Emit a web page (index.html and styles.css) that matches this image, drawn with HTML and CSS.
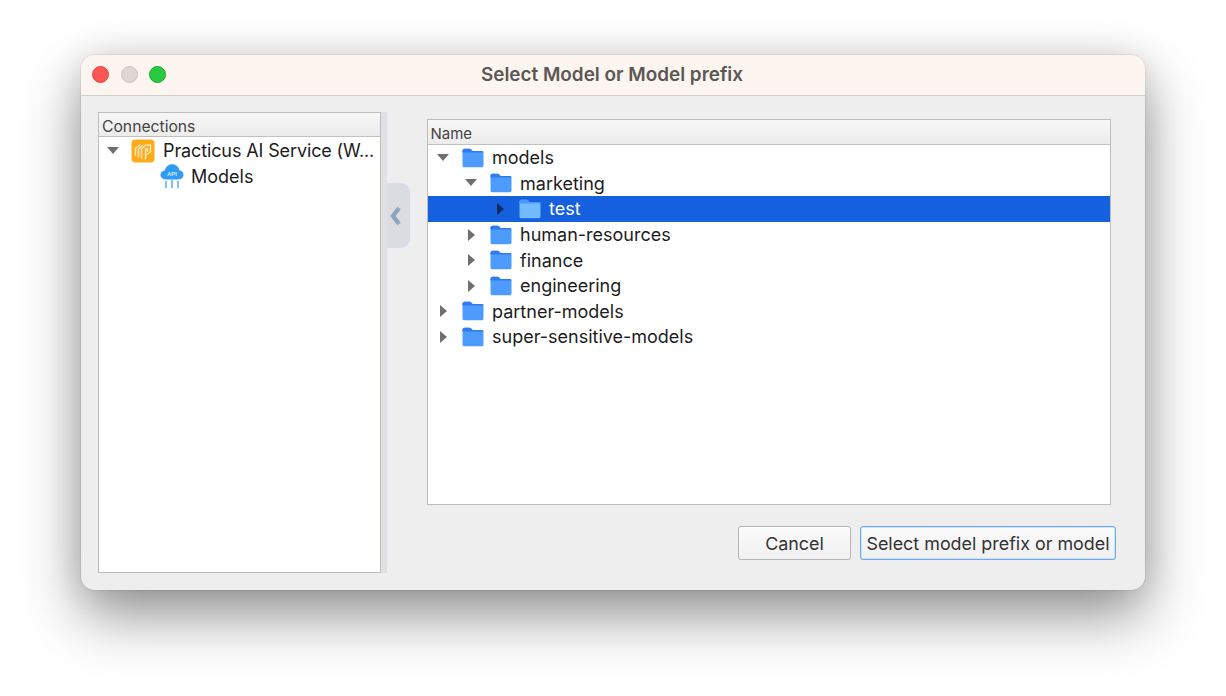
FILE: index.html
```html
<!DOCTYPE html>
<html lang="en">
<head>
<meta charset="utf-8">
<title>Select Model or Model prefix</title>
<link rel="stylesheet" href="styles.css">
</head>
<body>
<svg class="defs" width="0" height="0" aria-hidden="true">
  <defs>
    <symbol id="folder" viewBox="0 0 22 20">
      <path d="M0.5 3C0.5 1.8 1.3 0.8 2.6 0.8H7.4C8.3 0.8 8.8 1.2 9.4 1.8L10.6 3H19.6C20.8 3 21.5 3.8 21.5 5V17.2C21.5 18.5 20.8 19.3 19.6 19.3H2.4C1.2 19.3 0.5 18.5 0.5 17.2Z" fill="#4d9cfd"/>
      <path d="M0.5 3C0.5 1.8 1.3 0.8 2.6 0.8H7.4C8.3 0.8 8.8 1.2 9.4 1.8L10.6 3H19.6C20.8 3 21.5 3.6 21.5 4.4H0.5Z" fill="#2f7bf0"/>
    </symbol>
  </defs>
</svg>
<main class="window">
  <header class="titlebar">
    <div class="lights">
      <span class="light light-red"></span>
      <span class="light light-grey"></span>
      <span class="light light-green"></span>
    </div>
    <h1 class="title">Select Model or Model prefix</h1>
  </header>
  <div class="content">
    <section class="left-pane">
      <div class="tree left-tree">
        <div class="head">Connections</div>
        <div class="row row-conn">
          <span class="arrow arrow-down"></span>
          <svg class="conn-icon" viewBox="0 0 24 24" aria-hidden="true">
            <rect x="0.5" y="0.5" width="23" height="23" rx="4" fill="#fdab18"/>
            <g fill="none" stroke="#ffe6bd" stroke-width="1.5" stroke-linejoin="round" stroke-linecap="round">
              <path d="M4.5 16V9.5L8.5 6"/>
              <path d="M7.5 18V10L11.5 6.5"/>
              <path d="M10.5 19V10L14.5 6H19.5V13L15 16"/>
              <path d="M14.5 20V10H16.5V12.5"/>
            </g>
          </svg>
          <span class="label label-conn">Practicus AI Service (W...</span>
        </div>
        <div class="row row-api">
          <svg class="api-icon" viewBox="0 0 24 26" aria-hidden="true">
            <path d="M6 16.5C2.8 16.5 0.5 14.5 0.5 11.8C0.5 9.3 2.4 7.6 4.8 7.4C5.7 3.6 8.6 1.2 12.2 1.2C15.8 1.2 18.7 3.6 19.4 7.2C21.8 7.5 23.5 9.4 23.5 11.8C23.5 14.5 21.4 16.5 18.4 16.5Z" fill="#2f9bf5"/>
            <text x="12" y="13.4" text-anchor="middle" class="api-text">API</text>
            <g fill="none" stroke="#54aef7" stroke-width="1.5">
              <path d="M12 16.5V23M6 18V23M18 18V23"/>
            </g>
            <circle cx="12" cy="24" r="1.2" fill="#7cc1f9"/>
            <circle cx="6" cy="24" r="1.2" fill="#7cc1f9"/>
            <circle cx="18" cy="24" r="1.2" fill="#7cc1f9"/>
          </svg>
          <span class="label">Models</span>
        </div>
      </div>
      <div class="splitter"></div>
      <div class="handle">
        <svg class="chevron" viewBox="0 0 14 20" aria-hidden="true">
          <path d="M10 2L4 10L10 18" fill="none" stroke="#8fa4bd" stroke-width="4.4"/>
        </svg>
      </div>
    </section>
    <section class="right-pane">
      <div class="tree right-tree">
        <div class="head head-name">Name</div>
        <div class="row level-0">
          <span class="arrow arrow-down"></span>
          <svg class="folder"><use href="#folder"/></svg>
          <span class="label">models</span>
        </div>
        <div class="row level-1">
          <span class="arrow arrow-down"></span>
          <svg class="folder"><use href="#folder"/></svg>
          <span class="label">marketing</span>
        </div>
        <div class="row level-2 selected">
          <span class="arrow arrow-right"></span>
          <svg class="folder folder-sel"><use href="#folder"/></svg>
          <span class="label">test</span>
        </div>
        <div class="row level-1">
          <span class="arrow arrow-right"></span>
          <svg class="folder"><use href="#folder"/></svg>
          <span class="label">human-resources</span>
        </div>
        <div class="row level-1">
          <span class="arrow arrow-right"></span>
          <svg class="folder"><use href="#folder"/></svg>
          <span class="label">finance</span>
        </div>
        <div class="row level-1">
          <span class="arrow arrow-right"></span>
          <svg class="folder"><use href="#folder"/></svg>
          <span class="label">engineering</span>
        </div>
        <div class="row level-0">
          <span class="arrow arrow-right"></span>
          <svg class="folder"><use href="#folder"/></svg>
          <span class="label">partner-models</span>
        </div>
        <div class="row level-0">
          <span class="arrow arrow-right"></span>
          <svg class="folder"><use href="#folder"/></svg>
          <span class="label">super-sensitive-models</span>
        </div>
      </div>
      <div class="actions">
        <button class="btn btn-cancel" type="button">Cancel</button>
        <button class="btn btn-default" type="button">Select model prefix or model</button>
      </div>
    </section>
  </div>
</main>
</body>
</html>
```
FILE: styles.css
```css
* { box-sizing: border-box; }
html, body { height: 100%; }
body {
  margin: 0;
  background: #fff;
  padding: 55px 80px 0 81px;
  overflow: hidden;
  font-family: Inter, "Liberation Sans", sans-serif;
  color: #1c1c1c;
}
.defs { position: absolute; }
.window {
  width: 1064px;
  height: 535px;
  background: #eeeeee;
  border-radius: 14px;
  overflow: hidden;
  box-shadow: 0 0 0 1px rgba(0,0,0,.06), 0 26px 58px rgba(0,0,0,.42), 0 0 34px rgba(0,0,0,.1);
  display: flex;
  flex-direction: column;
}
.titlebar {
  height: 41px;
  flex: none;
  background: #fdf5ef;
  border-bottom: 1px solid #d2d0ce;
  display: flex;
  align-items: center;
  position: relative;
}
.lights { display: flex; gap: 11.5px; padding: 0 0 2px 11px; }
.light { width: 17px; height: 17px; border-radius: 50%; }
.light-red { background: #fc5753; border: 1px solid #df4744; }
.light-grey { background: #dcd7d2; border: 1px solid #c9c4bf; }
.light-green { background: #28c840; border: 1px solid #1dad2b; }
.title {
  position: absolute;
  left: 0; right: 0;
  margin: 0 2px 2px 0;
  text-align: center;
  font-size: 18.9px;
  font-weight: 600;
  color: #5b5855;
}
.content {
  flex: 1;
  display: flex;
  padding: 16px 0 17px 17px;
}
.left-pane { display: flex; flex: none; align-items: flex-start; height: 100%; }
.tree { background: #fff; border: 1px solid #bdbdbd; }
.left-tree { width: 283px; height: 100%; }
.splitter { width: 6px; height: 100%; background: #dfe1e4; }
.handle {
  width: 23px;
  height: 65px;
  margin-top: 71px;
  background: #d9dce0;
  border-radius: 0 9px 9px 0;
  display: flex;
  align-items: center;
  justify-content: center;
}
.chevron { width: 14px; height: 20px; margin-right: 6px; }
.right-pane {
  margin-left: 17px;
  width: 689px;
  display: flex;
  flex-direction: column;
}
.right-tree { width: 684px; height: 386px; margin-top: 7px; }
.head {
  height: 25px;
  background: linear-gradient(#f7f7f7, #ececec);
  border-bottom: 1px solid #c0c0c0;
  font-size: 15.7px;
  line-height: 27px;
  padding-left: 3px;
  color: #444;
}
.left-tree .head { height: 24px; }
.head-name { font-size: 15px; padding-left: 2.5px; }
.row {
  height: 25.6px;
  display: flex;
  align-items: center;
  font-size: 18px;
  white-space: nowrap;
}
.left-tree .row { height: 25.5px; }
.row-conn { padding-left: 8px; margin-top: 1px; }
.row-api { padding-left: 61px; }
.level-0 { padding-left: 9px; }
.level-1 { padding-left: 37px; }
.level-2 { padding-left: 66px; }
.arrow { width: 14px; height: 12px; flex: none; display: block; position: relative; }
.arrow-down::before {
  content: "";
  position: absolute; left: 0; top: 2px;
  border-left: 6.5px solid transparent;
  border-right: 6.5px solid transparent;
  border-top: 7px solid #6f6f6f;
}
.arrow-right::before {
  content: "";
  position: absolute; left: 3px; top: 0;
  border-top: 6.5px solid transparent;
  border-bottom: 6.5px solid transparent;
  border-left: 7px solid #6f6f6f;
}
.selected { background: #1560df; color: #fff; }
.selected .arrow-right::before { border-left-color: #0d2a5e; }
.folder { width: 22px; height: 20px; margin-left: 11px; flex: none; }
.folder-sel { filter: saturate(.75) brightness(1.22); }
.label { margin-left: 8px; }
.label-conn { letter-spacing: -0.12px; }
.conn-icon { width: 24px; height: 24px; margin-left: 10px; flex: none; }
.api-icon { width: 24px; height: 26px; flex: none; }
.row-api .label { margin-left: 7px; }
.api-text { font: 700 6px "Liberation Sans", sans-serif; fill: #d6edff; }
.actions {
  display: flex;
  justify-content: flex-end;
  gap: 9px;
  margin-top: 21px;
}
.btn {
  height: 34px;
  padding: 0;
  font: 17.9px Inter, "Liberation Sans", sans-serif;
  color: #333;
  border-radius: 3px;
  background: linear-gradient(#fbfbfb, #f0f0f0);
  border: 1px solid #b5b5b5;
  white-space: nowrap;
}
.btn-cancel { width: 113px; }
.btn-default {
  width: 256px;
  border: 1px solid #6eabea;
  box-shadow: inset 0 0 0 0.5px #a5cbf2;
}
```
